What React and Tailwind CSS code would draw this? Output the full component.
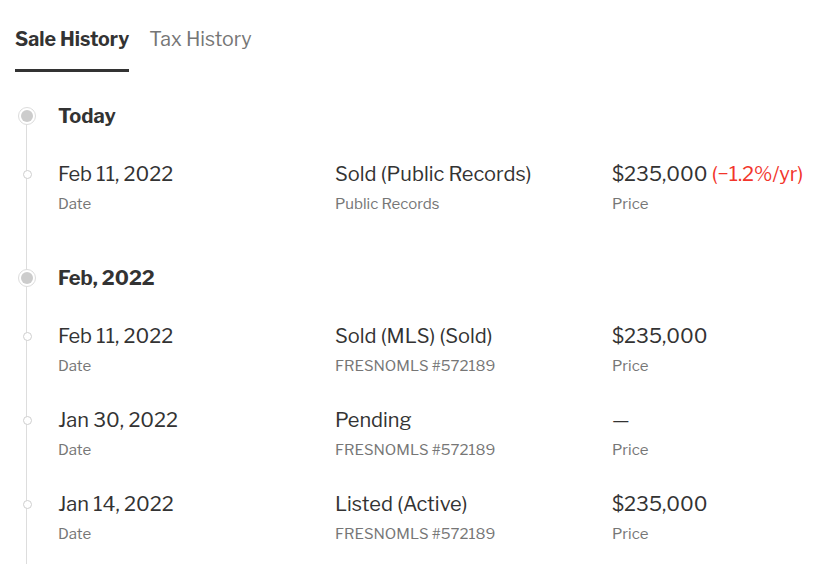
const GROUPS = [
    {
        title: 'Today',
        rows: [
            { date: 'Feb 11, 2022', event: 'Sold (Public Records)', source: 'Public Records', price: '$235,000', change: '(−1.2%/yr)' },
        ],
    },
    {
        title: 'Feb, 2022',
        rows: [
            { date: 'Feb 11, 2022', event: 'Sold (MLS) (Sold)', source: 'FRESNOMLS #572189', price: '$235,000' },
            { date: 'Jan 30, 2022', event: 'Pending', source: 'FRESNOMLS #572189', price: '—' },
            { date: 'Jan 14, 2022', event: 'Listed (Active)', source: 'FRESNOMLS #572189', price: '$235,000' },
        ],
    },
];

function BigDot() {
    return (
        <div className="flex h-[18px] w-[18px] items-center justify-center rounded-full border border-[#dcdcdc] bg-white">
            <div className="h-[12px] w-[12px] rounded-full bg-[#cccccc]" />
        </div>
    );
}

function SmallDot() {
    return <div className="h-[9px] w-[9px] rounded-full border border-[#cfcfcf] bg-white" />;
}

function Row({ row }) {
    return (
        <div className="flex">
            <div className="flex h-[28px] w-[24px] shrink-0 items-center justify-center"><SmallDot /></div>
            <div className="ml-[19px] grid flex-1 grid-cols-[277px_277px_1fr]">
                <div>
                    <p className="text-[20px] leading-[28px] text-[#333]">{row.date}</p>
                    <p className="mt-[6px] text-[15px] leading-[21px] text-[#767676]">Date</p>
                </div>
                <div>
                    <p className="text-[20px] leading-[28px] text-[#333]">{row.event}</p>
                    <p className="mt-[6px] text-[15px] leading-[21px] text-[#767676]">{row.source}</p>
                </div>
                <div>
                    <p className="whitespace-nowrap text-[20px] leading-[28px] text-[#333]">
                        {row.price}
                        {row.change && <span className="text-[#f2352b]"> {row.change}</span>}
                    </p>
                    <p className="mt-[6px] text-[15px] leading-[21px] text-[#767676]">Price</p>
                </div>
            </div>
        </div>
    );
}

export default function App() {
    return (
        <div className="min-h-[564px] bg-white px-[15px]" style={{ fontFamily: '"Libre Franklin", "Open Sans", Arial, sans-serif' }}>
            <div className="flex gap-[20px] pt-[26px]">
                <div className="border-b-[3px] border-[#333] pb-[17px] text-[19.6px] font-bold leading-[26px] text-[#333]">Sale History</div>
                <div className="pb-[17px] text-[19.6px] leading-[26px] text-[#767676]">Tax History</div>
            </div>

            <div className="relative flex flex-col gap-[49px] pt-[30px] pb-[40px]">
                <div className="absolute top-[44px] bottom-0 left-[11px] w-px bg-[#dddddd]" />
                {GROUPS.map(g => (
                    <div key={g.title} className="relative flex flex-col gap-[30px]">
                        <div className="flex">
                            <div className="flex h-[28px] w-[24px] shrink-0 items-center justify-center"><BigDot /></div>
                            <p className="ml-[19px] text-[20px] font-bold leading-[28px] text-[#333]">{g.title}</p>
                        </div>
                        <div className="flex flex-col gap-[29px]">
                            {g.rows.map((r, i) => <Row key={i} row={r} />)}
                        </div>
                    </div>
                ))}
            </div>
        </div>
    );
}
